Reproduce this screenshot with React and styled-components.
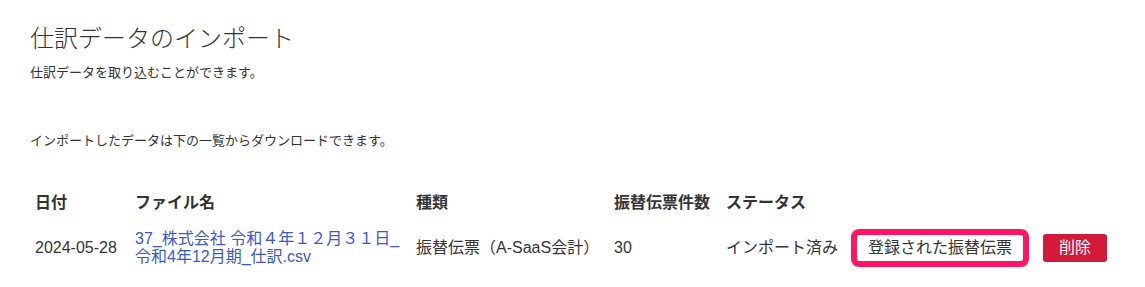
import * as React from "react";
import styled, { createGlobalStyle } from "styled-components";

const GlobalStyle = createGlobalStyle`
  body {
    margin: 0;
    background: #fff;
    color: #333;
    font-family: "Liberation Sans", "Noto Sans CJK JP", sans-serif;
  }
`;

const Page = styled.div`
  padding: 24px 30px 0;
`;

const Title = styled.h1`
  margin: 0;
  font-size: 24px;
  line-height: 29px;
  font-weight: 300;
  color: #333;
`;

const Lead = styled.p`
  margin: ${props => props.$top}px 0 0;
  font-size: 13px;
  line-height: 18px;
`;

const Table = styled.table`
  margin-top: 31px;
  border-collapse: collapse;
  table-layout: fixed;
  font-size: 16px;
`;

const Th = styled.th`
  height: 40px;
  padding: 0 5px;
  text-align: left;
  font-weight: bold;
  white-space: nowrap;
`;

const Td = styled.td`
  padding: 8px 5px;
  line-height: 18px;
  vertical-align: middle;
  white-space: nowrap;
`;

const FileLink = styled.a`
  color: #3a58d4;
  text-decoration: none;
  white-space: normal;
`;

const VoucherButton = styled.button`
  box-sizing: border-box;
  height: 38px;
  padding: 0 11px;
  border: 6px solid #ff1563;
  border-radius: 8px;
  background: #fff;
  color: #333;
  font: inherit;
  white-space: nowrap;
`;

const DeleteButton = styled.button`
  height: 28px;
  padding: 0 16px;
  border: none;
  border-radius: 3px;
  background: #d31a38;
  color: #fff;
  font: inherit;
`;

const columns = [100, 281, 198, 112, 125, 192, 74];

export default function App() {
  return (
    <Page>
      <GlobalStyle />
      <Title>仕訳データのインポート</Title>
      <Lead $top={11}>仕訳データを取り込むことができます。</Lead>
      <Lead $top={50}>インポートしたデータは下の一覧からダウンロードできます。</Lead>
      <Table>
        <colgroup>
          {columns.map((w, i) => (
            <col key={i} style={{ width: w }} />
          ))}
        </colgroup>
        <thead>
          <tr>
            <Th>日付</Th>
            <Th>ファイル名</Th>
            <Th>種類</Th>
            <Th>振替伝票件数</Th>
            <Th>ステータス</Th>
            <Th />
            <Th />
          </tr>
        </thead>
        <tbody>
          <tr>
            <Td>2024-05-28</Td>
            <Td>
              <FileLink href="#">
                37_株式会社 令和４年１２月３１日_令和4年12月期_仕訳.csv
              </FileLink>
            </Td>
            <Td>振替伝票（A-SaaS会計）</Td>
            <Td>30</Td>
            <Td>インポート済み</Td>
            <Td>
              <VoucherButton>登録された振替伝票</VoucherButton>
            </Td>
            <Td>
              <DeleteButton>削除</DeleteButton>
            </Td>
          </tr>
        </tbody>
      </Table>
    </Page>
  );
}
